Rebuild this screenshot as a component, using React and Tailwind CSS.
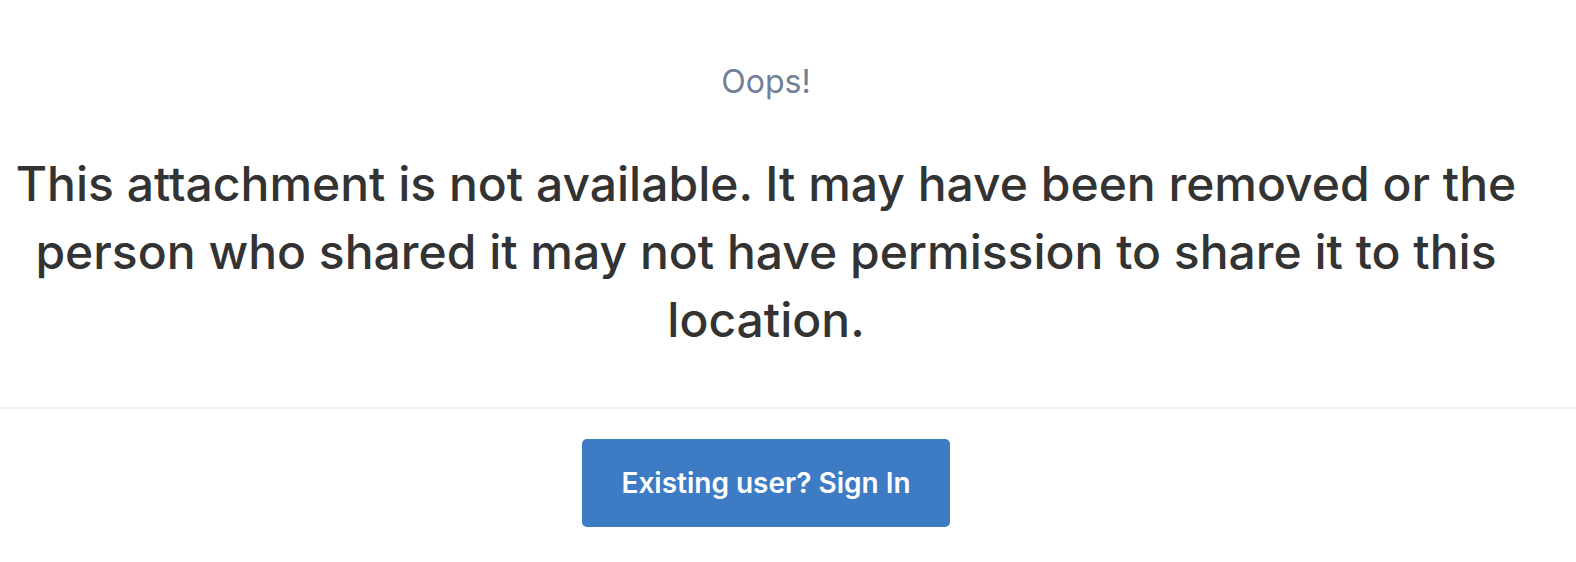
export default function App() {
  return (
    <div className="w-full bg-white" style={{ fontFamily: "Inter, 'Noto Sans', sans-serif" }}>
      <div className="pr-[44px] pt-[58px] text-center">
        <p className="text-[32px] leading-[48px] text-[#718096]">Oops!</p>
        <h1 className="mt-[44px] text-[48px] leading-[68px] font-medium text-[#333333]">
          This attachment is not available. It may have been removed or the person who shared it may not have permission to share it to this location.
        </h1>
      </div>
      <div className="mt-[53px] h-[2px] bg-[#eeeeee]" />
      <div className="flex justify-center pr-[44px] pt-[30px] pb-[35px]">
        <button className="w-[368px] h-[88px] rounded-[5px] bg-[#3d7cc4] text-white text-[28px] font-semibold">
          Existing user? Sign In
        </button>
      </div>
    </div>
  );
}
